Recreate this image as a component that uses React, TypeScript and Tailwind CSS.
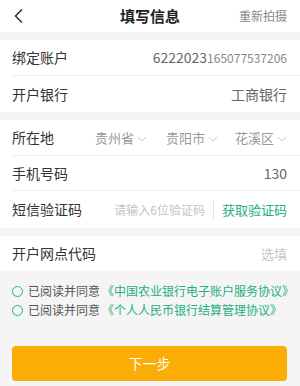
import React from "react";

const font = { fontFamily: '"Noto Sans CJK SC", "Noto Sans", sans-serif' };

const Chevron = () => (
  <svg width="10" height="6" viewBox="0 0 10 6" className="ml-[3px] mt-[2px]">
    <path d="M1 1l4 4 4-4" fill="none" stroke="#c8c8c8" strokeWidth="1" />
  </svg>
);

const Circle = () => (
  <span className="w-[11px] h-[11px] rounded-full border-[1.5px] border-[#1db584] shrink-0" />
);

const Row = ({ label, children, border = true, h = "h-[36px]" }: { label: string; children?: React.ReactNode; border?: boolean; h?: string }) => (
  <div className="pl-3">
    <div className={`flex items-center justify-between pr-[13px] ${h} ${border ? "border-b border-[#ececec]" : ""}`}>
      <span className="text-[14px] text-[#333]">{label}</span>
      {children}
    </div>
  </div>
);

export default function App() {
  return (
    <div className="w-[300px] h-[386px] bg-[#f5f5f5] overflow-hidden" style={font}>
      <div className="h-[32px] bg-white flex items-center justify-between px-3 relative">
        <svg width="12" height="16" viewBox="0 0 12 16" className="ml-[1px]">
          <path d="M9 1.5L2.5 8 9 14.5" fill="none" stroke="#333" strokeWidth="1.6" />
        </svg>
        <span className="absolute left-1/2 -translate-x-1/2 text-[15px] font-bold text-[#222]">填写信息</span>
        <span className="text-[12px] text-[#888] pr-[1px]">重新拍摄</span>
      </div>

      <div className="mt-2 bg-white">
        <Row label="绑定账户">
          <span className="text-[14px] text-[#666] flex items-baseline">
            6222023
            <span className="text-[12px] text-[#888]">165077537206</span>
          </span>
        </Row>
        <Row label="开户银行" border={false}>
          <span className="text-[14px] text-[#666]">工商银行</span>
        </Row>
      </div>

      <div className="mt-2 bg-white">
        <Row label="所在地">
          <div className="flex items-center text-[13px] text-[#999]">
            <span className="flex items-center">贵州省<Chevron /></span>
            <span className="flex items-center ml-[19px]">贵阳市<Chevron /></span>
            <span className="flex items-center ml-[17px]">花溪区<Chevron /></span>
          </div>
        </Row>
        <Row label="手机号码" h="h-[35px]">
          <span className="text-[14px] text-[#666]">130</span>
        </Row>
        <Row label="短信验证码" border={false} h="h-[37px]">
          <div className="flex items-center">
            <span className="text-[12px] text-[#c4c4c4]">请输入6位验证码</span>
            <span className="w-px h-[20px] bg-[#e6e6e6] mx-[8px]" />
            <span className="text-[13px] text-[#1bb07e]">获取验证码</span>
          </div>
        </Row>
      </div>

      <div className="mt-2 bg-white">
        <Row label="开户网点代码" border={false} h="h-[35px]">
          <span className="text-[13px] text-[#c4c4c4]">选填</span>
        </Row>
      </div>

      <div className="pt-[11px] pl-3 flex flex-col gap-[1px] text-[12px]">
        <div className="flex items-center h-[18px]">
          <Circle />
          <span className="ml-[5px] text-[#555]">已阅读并同意</span>
          <span className="ml-[2px] text-[#1bb07e]">《中国农业银行电子账户服务协议》</span>
        </div>
        <div className="flex items-center h-[18px]">
          <Circle />
          <span className="ml-[5px] text-[#555]">已阅读并同意</span>
          <span className="ml-[2px] text-[#1bb07e]">《个人人民币银行结算管理协议》</span>
        </div>
      </div>

      <div className="mt-[27px] mx-3 w-[275px] h-[35px] rounded bg-[#fbac05] flex items-center justify-center">
        <span className="text-[14px] text-white">下一步</span>
      </div>
    </div>
  );
}
